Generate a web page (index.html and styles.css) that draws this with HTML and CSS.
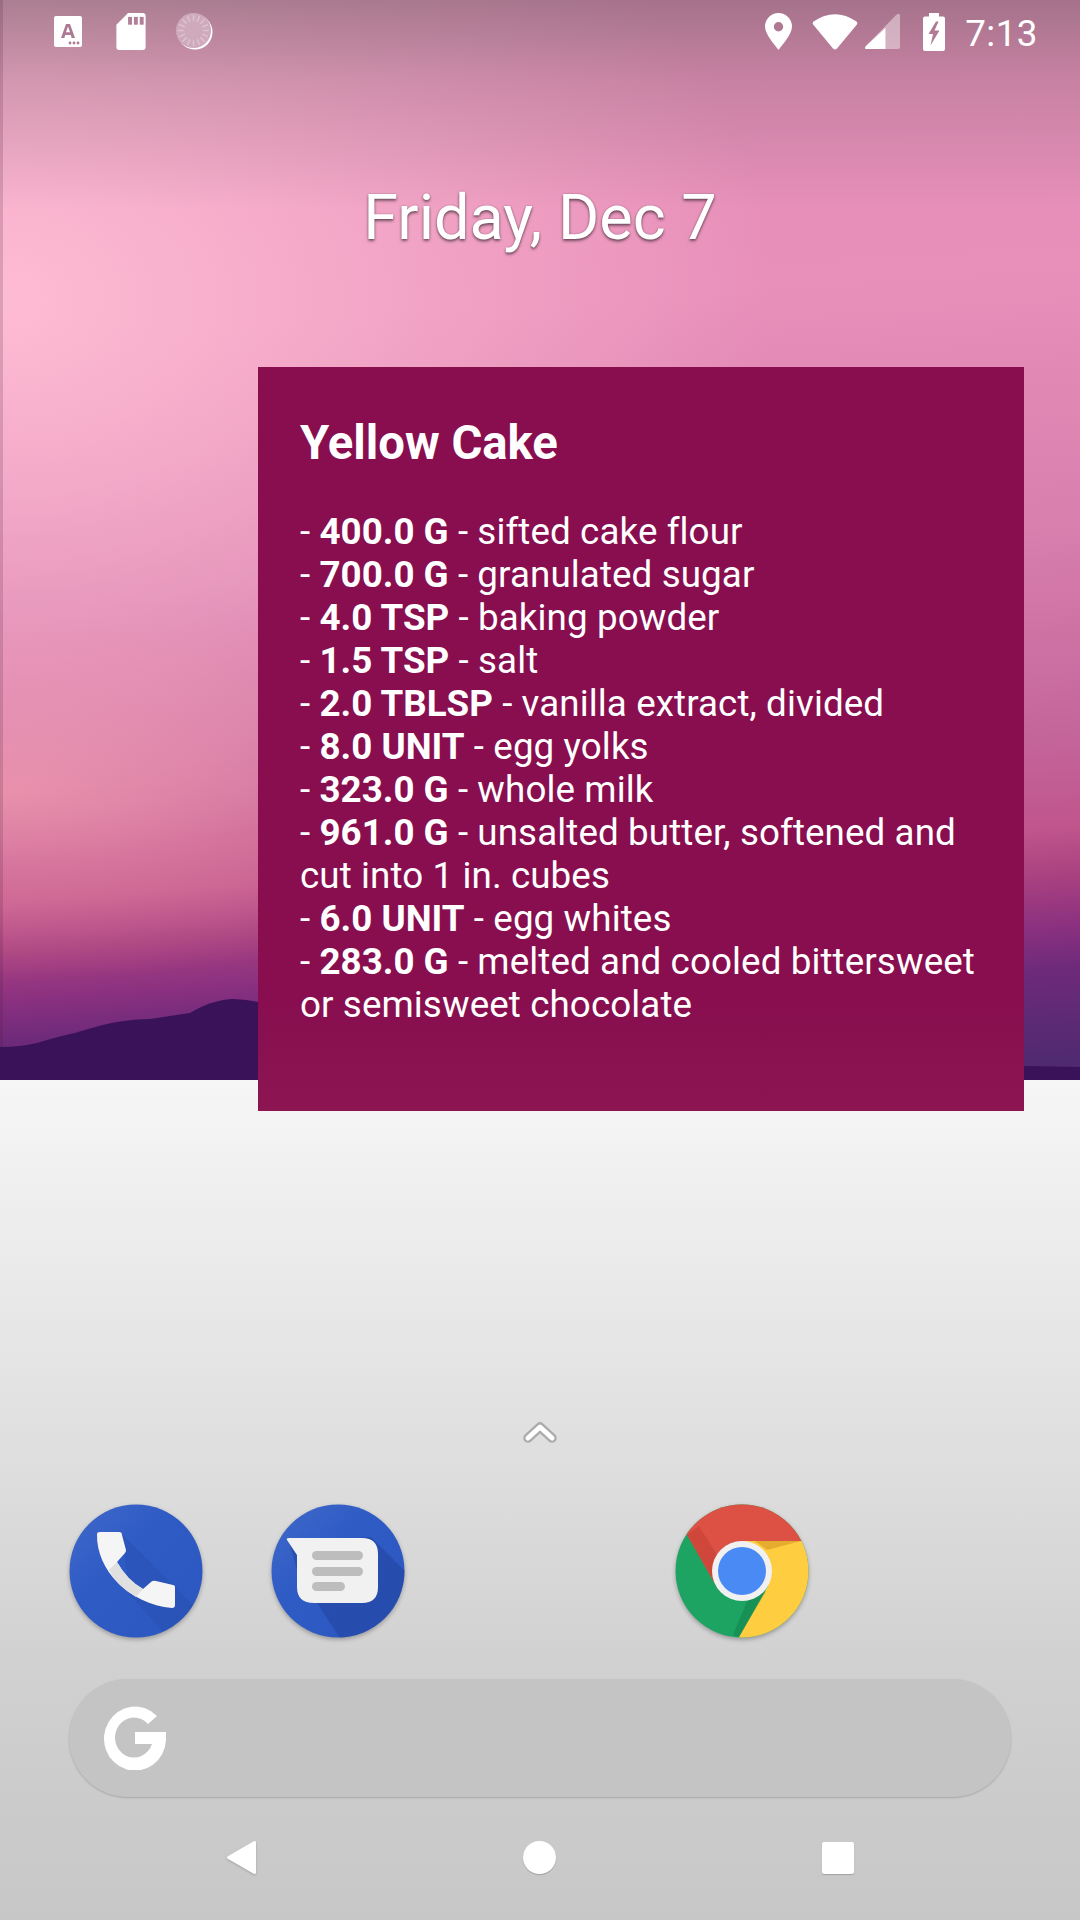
FILE: index.html
```html
<!DOCTYPE html>
<html lang="en">
<head>
<meta charset="utf-8">
<title>Home screen</title>
<link rel="stylesheet" href="styles.css">
</head>
<body>
<main class="screen">
  <section class="wallpaper">
    <div class="glow"></div>
    <svg class="mountain" viewBox="0 0 1080 90"><path d="M0 57 Q20 57 37 53 Q60 46 75 43 Q100 35 117 32 Q135 29 150 29 Q170 26 190 23 Q203 15 215 12 Q225 9 233 9 Q245 9 258 12 L500 40 L800 62 L1024 76 L1080 77 L1080 90 L0 90 Z"/></svg>
    <div class="statusbar">
      <div class="status-left">
        <svg class="ico-a" viewBox="0 0 28 31"><rect width="28" height="31" rx="2" fill="#fff"/><path d="M7 22 L12 8 H16 L21 22 H17.6 L16.8 19 H11.2 L10.400 22 Z M12 16.200 H16 L14 10.500 Z" fill="#ad7a93" fill-rule="evenodd"/><circle cx="16" cy="27" r="1.400" fill="#ad7a93"/><circle cx="20" cy="27" r="1.400" fill="#ad7a93"/><circle cx="24" cy="27" r="1.400" fill="#ad7a93"/></svg>
        <svg class="ico-sd" viewBox="0 0 30 38"><path d="M12 0 H27 A3 3 0 0 1 30 3 V35 A3 3 0 0 1 27 38 H3 A3 3 0 0 1 0 35 V12 Z" fill="#fff"/><rect x="12" y="4" width="4" height="8" fill="#b27f98"/><rect x="18" y="4" width="4" height="8" fill="#b27f98"/><rect x="24" y="4" width="4" height="8" fill="#b27f98"/></svg>
        <svg class="ico-spin" viewBox="0 0 38 38"><circle cx="19.500" cy="19.500" r="18" fill="#fff"/><circle cx="18" cy="18" r="18" fill="#cfa9bc"/><g stroke="#dcc2ce" stroke-width="1.600" stroke-linecap="round"><path d="M18 2.500V7.500M18 28.500V33.500M2.500 18H7.500M28.500 18H33.500M7 7L10.500 10.500M25.500 25.500L29 29M29 7L25.500 10.500M10.500 25.500L7 29M12 3.700L14 8.500M22 27.500L24 32.300M3.700 12L8.500 14M27.500 22L32.300 24M24 3.700L22 8.500M14 27.500L12 32.300M32.300 12L27.500 14M8.500 22L3.700 24"/></g></svg>
      </div>
      <div class="status-right">
        <svg class="ico-pin" viewBox="0 0 27 37"><path fill-rule="evenodd" d="M13.500 0 A13.500 13.500 0 0 1 27 13.500 C27 21 18 31 13.500 37 C9 31 0 21 0 13.500 A13.500 13.500 0 0 1 13.500 0 Z M13.500 9 A4.700 4.700 0 1 0 13.500 18.400 A4.700 4.700 0 1 0 13.500 9 Z" fill="#fff"/></svg>
        <svg class="ico-wifi" viewBox="0 0 46 37"><path d="M1.500 12 Q0 10 1.500 8.500 Q23 -6 44.500 8.500 Q46 10 44.500 12 L25 35.500 Q23 37.500 21 35.500 Z" fill="#fff"/></svg>
        <svg class="ico-signal" viewBox="0 0 36 36"><path d="M36 2 V34 A2 2 0 0 1 34 36 H1 Q-1 36 1 33 L32 1 Q36 -2 36 2 Z" fill="#fff" fill-opacity=".42"/><path d="M21 14.500 V36 H1 Q-1 36 1 33 Z" fill="#fff"/></svg>
        <svg class="ico-batt" viewBox="0 0 22 38"><path fill-rule="evenodd" d="M6 0 H16 V3.500 H20 A2 2 0 0 1 22 5.500 V36 A2 2 0 0 1 20 38 H2 A2 2 0 0 1 0 36 V5.500 A2 2 0 0 1 2 3.500 H6 Z M13 8.500 L5.500 21 H10 L7.500 32.500 L16.500 17.500 H11.500 L15.500 8.500 Z" fill="#fff"/></svg>
        <span class="clock">7:13</span>
      </div>
    </div>
    <h2 class="date">Friday, Dec 7</h2>
  </section>

  <article class="recipe">
    <h1 class="recipe-title">Yellow Cake</h1>
    <ul class="ingredients">
      <li>- <b>400.0 G</b> - sifted cake flour</li>
      <li>- <b>700.0 G</b> - granulated sugar</li>
      <li>- <b>4.0 TSP</b> - baking powder</li>
      <li>- <b>1.5 TSP</b> - salt</li>
      <li>- <b>2.0 TBLSP</b> - vanilla extract, divided</li>
      <li>- <b>8.0 UNIT</b> - egg yolks</li>
      <li>- <b>323.0 G</b> - whole milk</li>
      <li>- <b>961.0 G</b> - unsalted butter, softened and cut into 1 in. cubes</li>
      <li>- <b>6.0 UNIT</b> - egg whites</li>
      <li>- <b>283.0 G</b> - melted and cooled bittersweet or semisweet chocolate</li>
    </ul>
  </article>

  <section class="lower">
    <svg class="chevron" viewBox="0 0 34 23"><path d="M5 18 L17 7 L29 18" fill="none" stroke="#ababab" stroke-width="9.500" stroke-linecap="round" stroke-linejoin="round"/><path d="M5 18 L17 7 L29 18" fill="none" stroke="#fff" stroke-width="5" stroke-linecap="round" stroke-linejoin="round"/></svg>
    <div class="dock">
      <svg class="app" viewBox="0 0 134 134">
        <defs><clipPath id="c1"><circle cx="67" cy="67" r="66.500"/></clipPath><linearGradient id="bl" x1="0" y1="0" x2="1" y2="1"><stop offset="0" stop-color="#4069c8"/><stop offset=".4" stop-color="#2f5bc5"/><stop offset="1" stop-color="#2c57c0"/></linearGradient></defs>
        <circle cx="67" cy="67" r="66.500" fill="url(#bl)"/>
        <path clip-path="url(#c1)" d="M53 30 L134 111 L134 134 L100 134 L60 90 Z" fill="#264ca6" fill-opacity=".32"/>
        <path d="M28 30 Q28 28 31 28 H50 Q53 28 53 31 L57 46 Q57 48 56 49 L48 58 Q58 76 74 85 L82 78 Q84 76 87 77 L104 81 Q106 81 106 84 V101 Q106 104 103 104 C60 100 27 66 28 30 Z" fill="#f5f5f5"/>
        <path d="M48 58 Q58 76 74 85 L67 93 Q48 82 40 66 Z" fill="#e0e0e0"/>
      </svg>
      <svg class="app" viewBox="0 0 134 134">
        <defs><clipPath id="c2"><circle cx="67" cy="67" r="66.500"/></clipPath></defs>
        <circle cx="67" cy="67" r="66.500" fill="url(#bl)"/>
        <path clip-path="url(#c2)" d="M18 38 L27 70 L69 134 L134 134 L134 67 L100 33 Z" fill="#203f94" fill-opacity=".45"/>
        <path d="M16 36 Q15 34 18 34 H91 Q107 34 107 50 V83 Q107 99 91 99 H43 Q26 99 26 83 V51 Z" fill="#f1f1f1"/>
        <rect x="41" y="47" width="51" height="9" rx="4.500" fill="#bdbdbd"/><rect x="41" y="63" width="51" height="9" rx="4.500" fill="#bdbdbd"/><rect x="41" y="78" width="33" height="9" rx="4.500" fill="#bdbdbd"/>
      </svg>
      <span class="app-slot"></span>
      <svg class="app" viewBox="0 0 134 134">
        <defs><clipPath id="c3"><circle cx="67" cy="67" r="66.500"/></clipPath></defs>
        <g clip-path="url(#c3)">
          <rect width="134" height="134" fill="#1da462"/>
          <path d="M-6 0 L12 31 L40 80 L67 67 V37 H127 L150 37 V-5 H-6 Z" fill="#dd5144"/>
          <path d="M12 31 L38 76 L44 54 L24 22 Z" fill="#bb3a30" fill-opacity=".4"/>
          <path d="M67 37 H140 V140 H60 L64 133 L93 82 L67 67 Z" fill="#ffcd40"/>
          <path d="M80 37 H126 L92 46 Z" fill="#e3a92f" fill-opacity=".9"/>
          <path d="M91 87 L64 133 L58 131 L72 97 Z" fill="#137e4a" fill-opacity=".5"/>
        </g>
        <circle cx="67" cy="67" r="30" fill="#f1f1f1"/><circle cx="67" cy="67" r="24" fill="#4a8af4"/>
      </svg>
      <span class="app-slot"></span>
    </div>
    <div class="search">
      <svg class="g" viewBox="0 0 62 64"><path d="M53 10 A31 32 0 1 0 62 34 V26 H31 V38 H48 A19 20 0 1 1 44 18 Z" fill="#fff"/></svg>
    </div>
    <nav class="navbar">
      <svg class="nav-back" viewBox="0 0 31 35"><path d="M28.500 2.500 V32.500 L2.500 17.500 Z" fill="#fff" stroke="#fff" stroke-width="3" stroke-linejoin="round"/></svg>
      <span class="nav-home"></span>
      <span class="nav-recent"></span>
    </nav>
  </section>
</main>
</body>
</html>
```
FILE: styles.css
```css
* { box-sizing: border-box; }
html, body { margin: 0; padding: 0; }
body { width: 1080px; height: 1920px; overflow: hidden; font-family: Roboto, "Liberation Sans", sans-serif; }
.screen { position: relative; width: 1080px; height: 1920px; display: flex; flex-direction: column; background: linear-gradient(180deg, #f6f6f6 1080px, #e2e2e2 1400px, #d0d0d0 1680px, #c7c7c7 1920px); }

.wallpaper { position: relative; flex: 0 0 1080px; overflow: hidden; color: #fff;
  background:
    linear-gradient(180deg, rgba(75,75,75,.42) 0, rgba(75,75,75,.2) 80px, rgba(75,75,75,0) 210px),
    radial-gradient(780px 560px at 0 300px, rgba(255,190,212,.95), rgba(255,190,212,0) 100%),
    radial-gradient(560px 190px at 0 790px, rgba(240,150,170,.75), rgba(240,150,170,0) 100%),
    linear-gradient(176deg, #e58fb8 0, #e88fba 340px, #d87fae 600px, #c4659a 810px, #c0558c 900px, #a84080 950px, #8a3080 1000px, #6e2a7a 1040px, #4f2a70 1135px); }
.glow { position: absolute; left: 0; top: 0; width: 3px; height: 100%; background: rgba(70,30,60,.18); }
.mountain { position: absolute; left: 0; top: 990px; width: 1080px; height: 90px; fill: #3a1259; }

.statusbar { position: relative; display: flex; justify-content: space-between; align-items: center; height: 63px; padding: 0 42px 0 54px; }
.status-left, .status-right { display: flex; align-items: center; }
.ico-a { width: 28px; height: 31px; }
.ico-sd { width: 30px; height: 37px; margin-left: 34px; }
.ico-spin { width: 37px; height: 37px; margin-left: 30px; }
.ico-pin { width: 27px; height: 37px; }
.ico-wifi { width: 46px; height: 37px; margin-left: 20px; }
.ico-signal { width: 35px; height: 35px; margin-left: 7px; }
.ico-batt { width: 22px; height: 38px; margin-left: 23px; }
.clock { margin-left: 20px; padding-top: 3px; font-size: 36.750px; line-height: 43px; letter-spacing: .5px; }

.date { position: relative; margin: 118px 0 0; text-align: center; font-size: 63px; line-height: 74px; font-weight: 400; text-shadow: 0 2px 3px rgba(0,0,0,.5), 0 0 2px rgba(0,0,0,.25); }

.recipe { position: absolute; left: 258px; top: 367px; width: 766px; height: 744px; padding: 49px 42px 42px; background: linear-gradient(180deg, #880e4f 85%, #8c1552 100%); color: #fff; }
.recipe-title { margin: 0 0 39px; font-size: 47.250px; line-height: 55px; font-weight: 700; }
.ingredients { list-style: none; margin: 0; padding: 0; font-size: 36.750px; line-height: 43px; letter-spacing: .1px; }
.ingredients b { font-weight: 700; letter-spacing: 0; }

.lower { flex: 1; display: flex; flex-direction: column; }
.chevron { align-self: center; width: 34px; height: 23px; margin-top: 340px; }
.dock { display: flex; margin-top: 61px; padding-left: 69px; gap: 68px; }
.app { width: 134px; height: 134px; flex: none; filter: drop-shadow(0 2px 2px rgba(0,0,0,.28)); }
.app-slot { width: 134px; height: 134px; flex: none; }
.search { height: 118px; margin: 41px 69px 0; border-radius: 59px; background: #c4c4c4; box-shadow: 0 1px 2px rgba(0,0,0,.18); display: flex; align-items: center; padding-left: 35px; }
.g { width: 62px; height: 64px; }
.navbar { display: flex; justify-content: space-between; align-items: center; margin-top: 43px; padding: 0 226px; }
.nav-back { width: 31px; height: 35px; filter: drop-shadow(0 1px 1px rgba(0,0,0,.2)); }
.nav-home { width: 33px; height: 33px; border-radius: 50%; background: #fff; box-shadow: 0 1px 1px rgba(0,0,0,.2); }
.nav-recent { width: 32px; height: 32px; border-radius: 2px; background: #fff; box-shadow: 0 1px 1px rgba(0,0,0,.2); }
```
